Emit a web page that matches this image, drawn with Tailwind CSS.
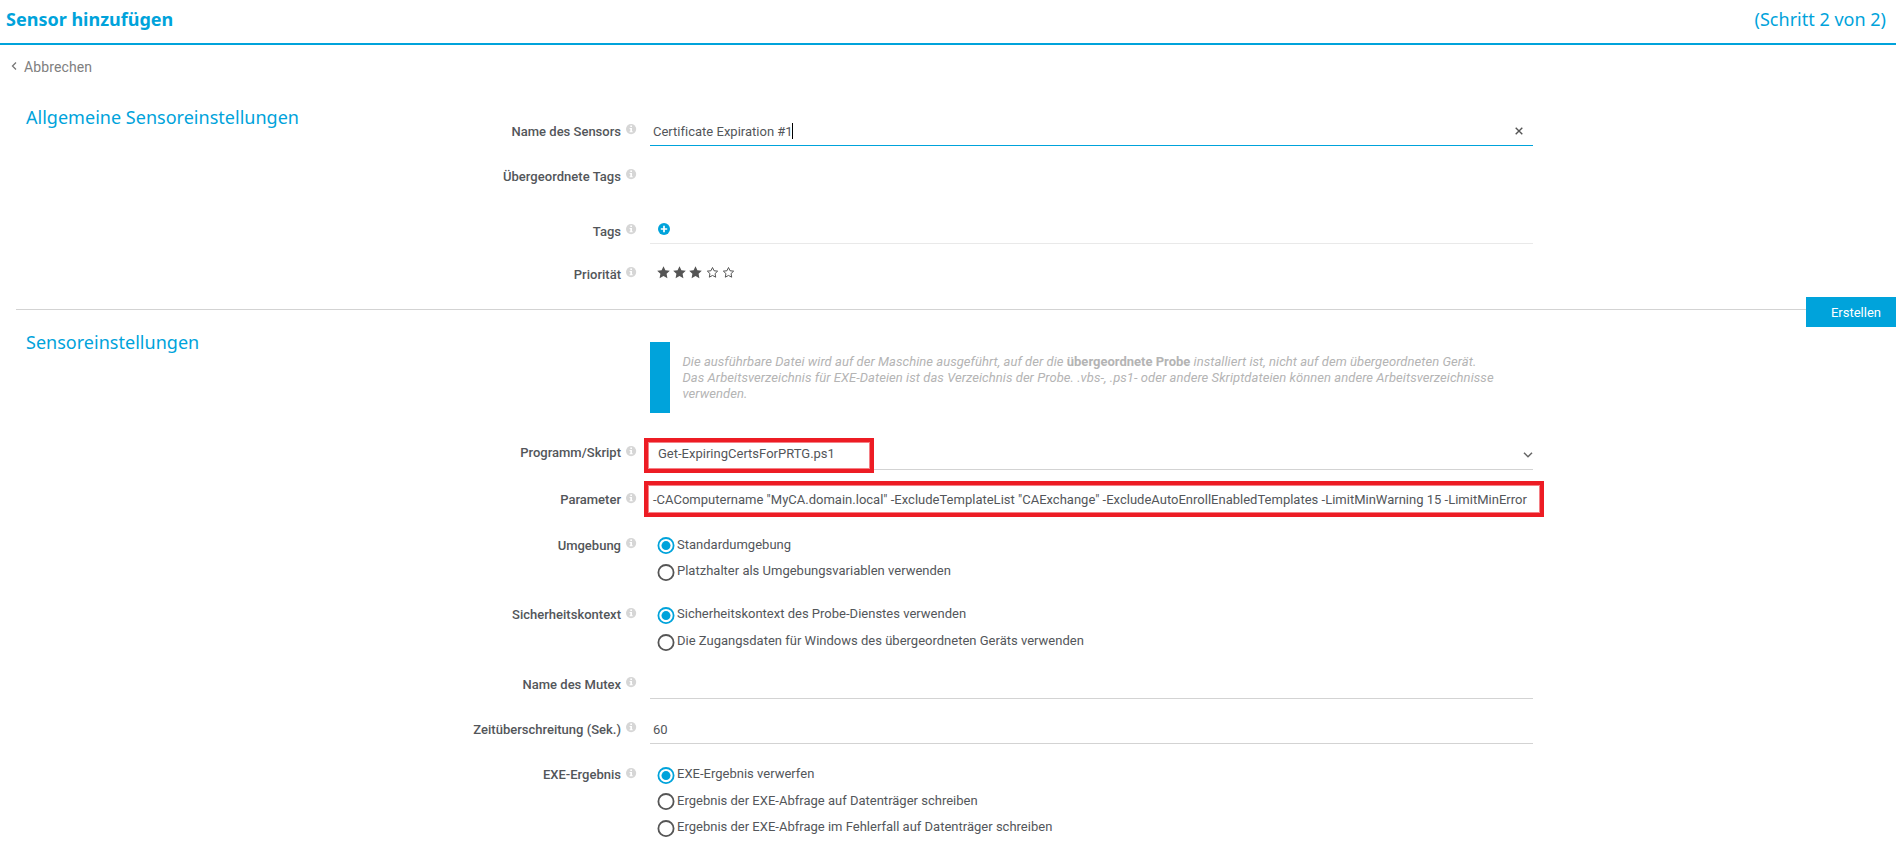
<!DOCTYPE html>
<html lang="de">
<head>
<meta charset="utf-8">
<title>Sensor hinzufügen</title>
<script src="https://cdn.jsdelivr.net/npm/@tailwindcss/browser@4"></script>
</head>
<body class="h-[850px] overflow-hidden bg-white font-['Roboto',sans-serif] text-[13px] leading-[22px] tracking-[0.006px] text-[#53565a]">
<svg class="hidden">
  <symbol id="info" viewBox="0 0 11 11"><circle cx="5.100" cy="5.100" r="5.100" fill="#d6d6d6"/><path d="M4.300 1.600h1.700v1.400H4.300zM3.600 4h2.400v3.200h.7v1H3.600v-1h.7V5H3.600z" fill="#fff"/></symbol>
  <symbol id="star" viewBox="0 0 13 13"><path d="M6.500 .3l1.900 4 4.400.5-3.200 3 .8 4.400-3.900-2.100-3.900 2.100.8-4.400-3.200-3 4.400-.5z" fill="#555"/></symbol>
  <symbol id="star-o" viewBox="0 0 13 13"><path d="M6.500 1.500l1.550 3.250 3.600.4-2.600 2.450.65 3.600-3.200-1.750-3.200 1.750.65-3.600-2.600-2.450 3.600-.4z" fill="none" stroke="#555" stroke-width="1"/></symbol>
  <symbol id="on" viewBox="0 0 18 18"><circle cx="9" cy="8.600" r="7.600" fill="#fff" stroke="#00a3db" stroke-width="1.800"/><circle cx="9" cy="8.600" r="4.500" fill="#00a3db"/></symbol>
  <symbol id="off" viewBox="0 0 18 18"><circle cx="9" cy="8.600" r="7.600" fill="#fff" stroke="#555" stroke-width="1.800"/></symbol>
</svg>

<header class="flex h-[45px] items-start justify-between border-b-2 border-[#00a3db] pt-[7px] pr-[10px] pl-[6px] font-['Noto_Sans',sans-serif] text-[18px] leading-6 text-[#00a3db]">
  <h1 class="font-bold">Sensor hinzufügen</h1>
  <span>(Schritt 2 von 2)</span>
</header>

<a class="flex h-[61px] items-start pt-[12px] pl-[11px] text-[14px] leading-5 tracking-[0.12px] text-[#808080]">
  <svg class="mt-[5px] mr-[7px] h-[8px] w-[6px]" viewBox="0 0 6 8"><path d="M5 .5L1.500 4 5 7.500" fill="none" stroke="#777" stroke-width="1.300"/></svg>Abbrechen
</a>

<section class="flex h-[203px] pt-[15px]">
  <h2 class="-mt-[16px] w-[450px] shrink-0 pl-[26px] font-['Noto_Sans',sans-serif] text-[18px] leading-6 tracking-[0.02px] text-[#00a3db]">Allgemeine Sensoreinstellungen</h2>
  <div class="w-[1083px]">
    <div class="flex h-[45px] items-start">
      <b class="w-[171px] text-right font-medium">Name des Sensors</b><svg class="mt-[3px] mr-[13px] ml-[5px] size-[11px]"><use href="#info"/></svg>
      <div class="flex h-[25px] w-[883px] border-b border-[#00a3db] pl-[3px]">
        <span>Certificate Expiration #1</span><i class="mt-[2px] -ml-px h-[16px] w-px bg-black"></i>
        <svg class="mt-[6px] mr-[10px] ml-auto size-[8px]" viewBox="0 0 8 8"><path d="M.7.7l6.600 6.600M7.300.7L.7 7.300" stroke="#555" stroke-width="1.400"/></svg>
      </div>
    </div>
    <div class="flex h-[55px] items-start">
      <b class="w-[171px] text-right font-medium tracking-[0.04px]">Übergeordnete Tags</b><svg class="mt-[3px] ml-[5px] size-[11px]"><use href="#info"/></svg>
    </div>
    <div class="flex h-[43px] items-start">
      <b class="w-[171px] text-right font-medium">Tags</b><svg class="mt-[3px] mr-[13px] ml-[5px] size-[11px]"><use href="#info"/></svg>
      <div class="h-[23px] w-[883px] border-b border-[#e9e9e9] pt-[2px] pl-[8px]">
        <svg class="size-[12px]" viewBox="0 0 12 12"><circle cx="6" cy="6" r="6" fill="#00a3db"/><path d="M6 2.800v6.400M2.800 6h6.400" stroke="#fff" stroke-width="1.700"/></svg>
      </div>
    </div>
    <div class="flex items-start">
      <b class="w-[171px] text-right font-medium">Priorität</b><svg class="mt-[3px] mr-[21px] ml-[5px] size-[11px]"><use href="#info"/></svg>
      <div class="mt-[2px] -ml-px flex gap-[3.200px]">
        <svg class="size-[13px]"><use href="#star"/></svg><svg class="size-[13px]"><use href="#star"/></svg><svg class="size-[13px]"><use href="#star"/></svg><svg class="size-[13px]"><use href="#star-o"/></svg><svg class="size-[13px]"><use href="#star-o"/></svg>
      </div>
    </div>
  </div>
</section>

<div class="ml-[16px] flex h-[33px] items-start">
  <hr class="w-[1790px] border-[#d3d3d3]">
  <button class="-mt-[12px] h-[30px] w-[90px] bg-[#00a3db] pt-px pl-[10px] text-white">Erstellen</button>
</div>

<section class="flex">
  <h2 class="-mt-[12px] w-[450px] shrink-0 pl-[26px] font-['Noto_Sans',sans-serif] text-[18px] leading-6 tracking-[0.02px] text-[#00a3db]">Sensoreinstellungen</h2>
  <div class="w-[1094px]">
    <div class="ml-[200px] flex h-[100px] items-start">
      <div class="h-[71px] w-[32.500px] border-l-[20px] border-[#00a3db]"></div>
      <p class="pt-[12px] leading-4 tracking-[0.058px] whitespace-nowrap text-[#b4b4b4] italic"><span class="tracking-[0.045px]">Die ausführbare Datei wird auf der Maschine ausgeführt, auf der die <b class="font-bold tracking-normal not-italic">übergeordnete Probe</b> installiert ist, nicht auf dem übergeordneten Gerät.</span><br>Das Arbeitsverzeichnis für EXE-Dateien ist das Verzeichnis der Probe. .vbs-, .ps1- oder andere Skriptdateien können andere Arbeitsverzeichnisse<br>verwenden.</p>
    </div>
    <div class="flex h-[47px] items-start">
      <b class="w-[171px] text-right font-medium">Programm/Skript</b><svg class="mt-[4px] mr-[13px] ml-[5px] size-[11px]"><use href="#info"/></svg>
      <div class="relative flex h-[28px] w-[883px] border-b border-[#d3d3d3] pt-px pl-[8px]">
        <span>Get-ExpiringCertsForPRTG.ps1</span>
        <svg class="mt-[9px] ml-auto h-[6px] w-[10px]" viewBox="0 0 10 6"><path d="M1 .8L5 4.800 9 .8" fill="none" stroke="#666" stroke-width="1.500"/></svg>
        <div class="absolute -top-[4px] -left-[6px] h-[35px] w-[230px] border-4 border-[#ed1c24]"><div class="h-full border border-[#f58086]"></div></div>
      </div>
    </div>
    <div class="flex h-[46px] items-start">
      <b class="w-[171px] text-right font-medium">Parameter</b><svg class="mt-[4px] mr-[13px] ml-[5px] size-[11px]"><use href="#info"/></svg>
      <div class="relative w-[883px] pl-[3px] whitespace-nowrap">
        <span>-CAComputername "MyCA.domain.local" -ExcludeTemplateList "CAExchange" -ExcludeAutoEnrollEnabledTemplates -LimitMinWarning 15 -LimitMinError</span>
        <div class="absolute -top-[8px] -left-[6px] h-[36px] w-[900px] border-4 border-[#ed1c24]"><div class="h-full border border-[#f58086]"></div></div>
      </div>
    </div>
    <div class="flex h-[69px] items-start">
      <b class="w-[171px] text-right font-medium">Umgebung</b><svg class="mt-[3px] mr-[20px] ml-[5px] size-[11px]"><use href="#info"/></svg>
      <div class="-mt-px">
        <label class="flex h-[26px]"><svg class="mt-[3px] mr-[2px] size-[18px]"><use href="#on"/></svg>Standardumgebung</label>
        <label class="flex"><svg class="mt-[4px] mr-[2px] size-[18px]"><use href="#off"/></svg>Platzhalter als Umgebungsvariablen verwenden</label>
      </div>
    </div>
    <div class="flex h-[70px] items-start">
      <b class="w-[171px] text-right font-medium">Sicherheitskontext</b><svg class="mt-[4px] mr-[20px] ml-[5px] size-[11px]"><use href="#info"/></svg>
      <div class="-mt-px">
        <label class="flex h-[27px]"><svg class="mt-[4px] mr-[2px] size-[18px]"><use href="#on"/></svg>Sicherheitskontext des Probe-Dienstes verwenden</label>
        <label class="flex"><svg class="mt-[4px] mr-[2px] size-[18px]"><use href="#off"/></svg>Die Zugangsdaten für Windows des übergeordneten Geräts verwenden</label>
      </div>
    </div>
    <div class="flex h-[45px] items-start">
      <b class="w-[171px] text-right font-medium">Name des Mutex</b><svg class="mt-[3px] mr-[13px] ml-[5px] size-[11px]"><use href="#info"/></svg>
      <div class="h-[25px] w-[883px] border-b border-[#d3d3d3]"></div>
    </div>
    <div class="flex h-[45px] items-start">
      <b class="w-[171px] text-right font-medium">Zeitüberschreitung (Sek.)</b><svg class="mt-[3px] mr-[13px] ml-[5px] size-[11px]"><use href="#info"/></svg>
      <div class="h-[25px] w-[883px] border-b border-[#d3d3d3] pl-[3px]">60</div>
    </div>
    <div class="flex items-start">
      <b class="w-[171px] text-right font-medium">EXE-Ergebnis</b><svg class="mt-[4px] mr-[20px] ml-[5px] size-[11px]"><use href="#info"/></svg>
      <div class="-mt-px">
        <label class="flex h-[27px]"><svg class="mt-[4px] mr-[2px] size-[18px]"><use href="#on"/></svg>EXE-Ergebnis verwerfen</label>
        <label class="flex h-[26px]"><svg class="mt-[3px] mr-[2px] size-[18px]"><use href="#off"/></svg>Ergebnis der EXE-Abfrage auf Datenträger schreiben</label>
        <label class="flex"><svg class="mt-[4px] mr-[2px] size-[18px]"><use href="#off"/></svg>Ergebnis der EXE-Abfrage im Fehlerfall auf Datenträger schreiben</label>
      </div>
    </div>
  </div>
</section>
</body>
</html>
